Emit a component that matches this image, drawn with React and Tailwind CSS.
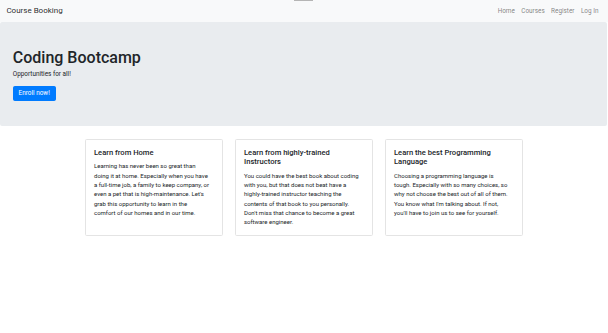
import React from "react";

const font = { fontFamily: 'Roboto, "Noto Sans", "Liberation Sans", sans-serif' };

function Card({ title, lines }) {
  return (
    <div className="flex-1 rounded-[1.6px] border border-[#e4e4e4] bg-white px-[8px] pt-[8px] pb-[8px]">
      <h5 className="mb-[4.4px] text-[7.6px] font-medium leading-[9.3px] text-[#212529]">
        {title.map((t, i) => (
          <span key={i} className="block whitespace-nowrap">{t}</span>
        ))}
      </h5>
      <p className="text-[6px] leading-[9.3px] text-[#212529]">
        {lines.map((t, i) => (
          <span key={i} className="block whitespace-nowrap">{t}</span>
        ))}
      </p>
    </div>
  );
}

export default function App() {
  return (
    <div className="relative min-h-[333px] w-full bg-white leading-none" style={font}>
      <div className="absolute left-[294px] top-0 h-[1px] w-[19px] bg-[#b5b5b5]" />
      <nav className="flex h-[22.4px] items-center justify-between bg-[#f8f9fa] px-[6.4px]">
        <span className="text-[8px] leading-none text-[rgba(0,0,0,0.85)]">Course Booking</span>
        <div className="flex text-[6.4px] leading-none text-[rgba(0,0,0,0.5)]">
          <span className="px-[3.2px]">Home</span>
          <span className="px-[3.2px]">Courses</span>
          <span className="px-[3.2px]">Register</span>
          <span className="pl-[3.2px] pr-[3.2px]">Log In</span>
        </div>
      </nav>
      <div className="mb-[12.8px] mr-[1px] rounded-[2px] bg-[#e9ecef] px-[12.8px] pt-[25.6px] pb-[25px]">
        <h1 className="mb-[3.2px] text-[16px] font-medium leading-[19.2px] text-[#212529]">Coding Bootcamp</h1>
        <p className="mb-[6px] text-[6.4px] leading-[9.6px] text-[#212529]">Opportunities for all!</p>
        <button className="block rounded-[1.6px] border-[0.8px] border-[#007bff] bg-[#007bff] px-[4.8px] py-[2px] text-[6.4px] leading-[9px] text-white">
          Enroll now!
        </button>
      </div>
      <div className="mx-auto flex w-[438px] gap-[12px]">
        <Card
          title={["Learn from Home"]}
          lines={[
            "Learning has never been so great than",
            "doing it at home. Especially when you have",
            "a full-time job, a family to keep company, or",
            "even a pet that is high-maintenance. Let's",
            "grab this opportunity to learn in the",
            "comfort of our homes and in our time.",
          ]}
        />
        <Card
          title={["Learn from highly-trained", "Instructors"]}
          lines={[
            "You could have the best book about coding",
            "with you, but that does not beat have a",
            "highly-trained instructor teaching the",
            "contents of that book to you personally.",
            "Don't miss that chance to become a great",
            "software engineer.",
          ]}
        />
        <Card
          title={["Learn the best Programming", "Language"]}
          lines={[
            "Choosing a programming language is",
            "tough. Especially with so many choices, so",
            "why not choose the best out of all of them.",
            "You know what I'm talking about. If not,",
            "you'll have to join us to see for yourself.",
          ]}
        />
      </div>
    </div>
  );
}
